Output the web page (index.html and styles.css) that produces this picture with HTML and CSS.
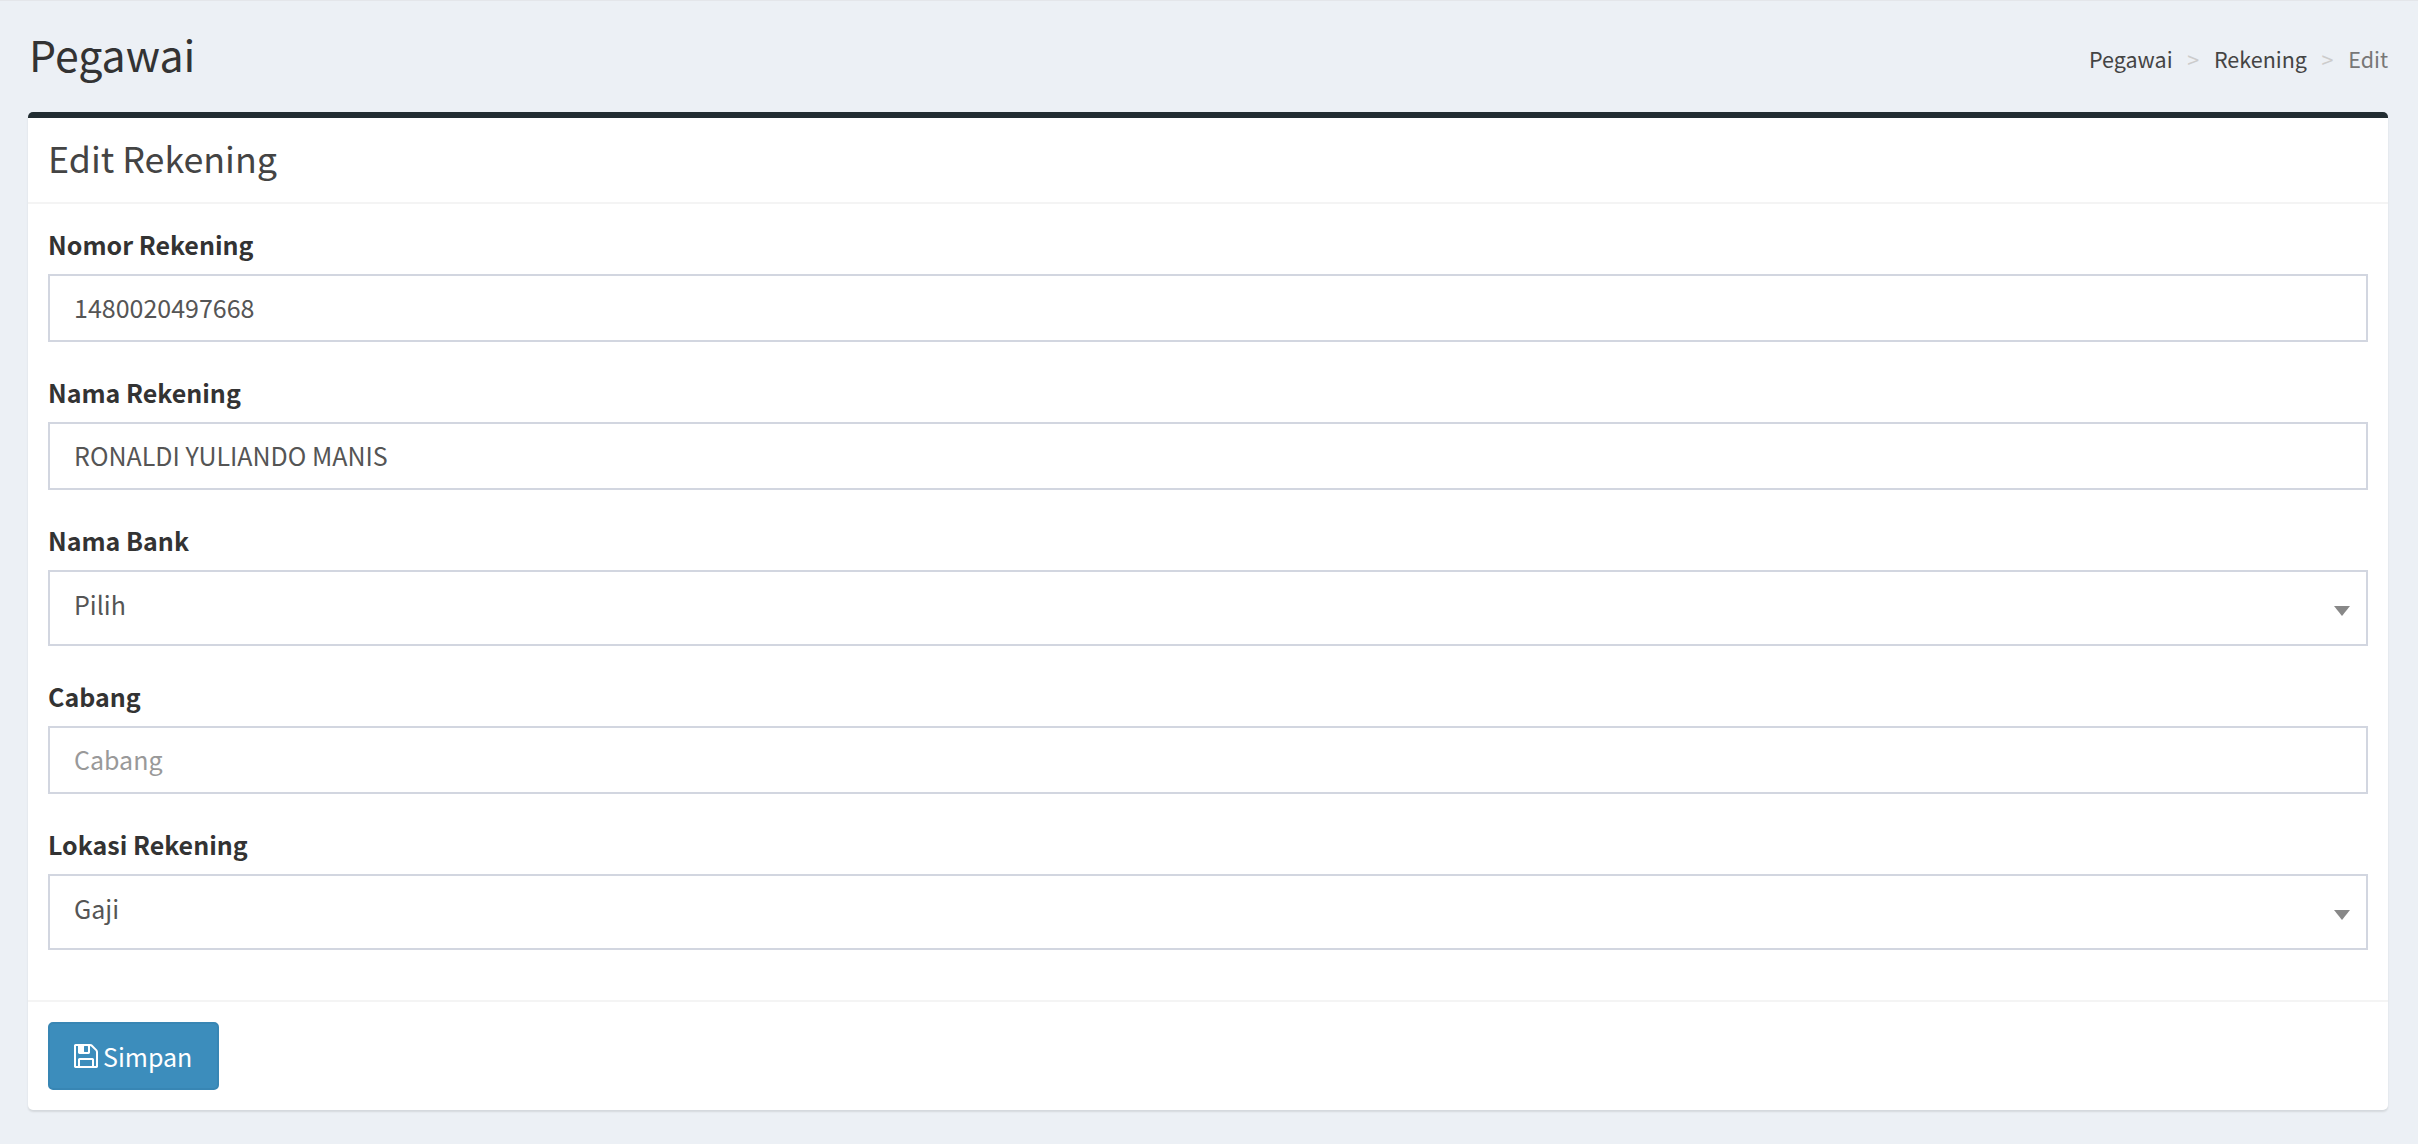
FILE: index.html
```html
<!DOCTYPE html>
<html lang="id">
<head>
<meta charset="utf-8">
<title>Edit Rekening</title>
<link rel="stylesheet" href="styles.css">
</head>
<body>
<div class="page">
  <header class="page-header">
    <h1 class="page-title">Pegawai</h1>
    <nav class="crumbs">
      <a class="crumb">Pegawai</a><span class="sep">&gt;</span>
      <a class="crumb">Rekening</a><span class="sep">&gt;</span>
      <span class="crumb current">Edit</span>
    </nav>
  </header>
  <section class="box">
    <div class="box-header"><h2 class="box-title">Edit Rekening</h2></div>
    <form class="box-body">
      <div class="field">
        <label class="label">Nomor Rekening</label>
        <input class="control" type="text" value="1480020497668">
      </div>
      <div class="field">
        <label class="label">Nama Rekening</label>
        <input class="control" type="text" value="RONALDI YULIANDO MANIS">
      </div>
      <div class="field">
        <label class="label">Nama Bank</label>
        <div class="select-wrap">
          <select class="control select"><option>Pilih</option></select>
        </div>
      </div>
      <div class="field">
        <label class="label">Cabang</label>
        <input class="control" type="text" placeholder="Cabang">
      </div>
      <div class="field">
        <label class="label">Lokasi Rekening</label>
        <div class="select-wrap">
          <select class="control select"><option>Gaji</option></select>
        </div>
      </div>
    </form>
    <div class="box-footer">
      <button class="btn" type="button">
        <svg class="icon" viewBox="128 128 1536 1536" aria-hidden="true"><path fill="currentColor" d="M512 1536h768v-384h-768v384zm896 0h128v-896q0-14-10-38.500t-20-34.500l-281-281q-10-10-34-20t-39-10v416q0 40-28 68t-68 28h-576q-40 0-68-28t-28-68v-416h-128v1280h128v-416q0-40 28-68t68-28h832q40 0 68 28t28 68v416zm-384-928v-320q0-13-9.500-22.500t-22.500-9.500h-192q-13 0-22.500 9.500t-9.500 22.500v320q0 13 9.500 22.500t22.500 9.500h192q13 0 22.500-9.500t9.500-22.500zm640 32v928q0 40-28 68t-68 28h-1344q-40 0-68-28t-28-68v-1344q0-40 28-68t68-28h928q40 0 88 20t76 48l280 280q28 28 48 76t20 88z"/></svg>
        <span>Simpan</span>
      </button>
    </div>
  </section>
</div>
</body>
</html>
```
FILE: styles.css
```css
* { box-sizing: border-box; }
html, body { margin: 0; height: 100%; }
body {
  background: #ecf0f5;
  color: #333;
  font-family: "Noto Sans CJK SC", "Noto Sans", sans-serif;
  font-size: 25px;
  overflow: hidden;
}
.page {
  min-height: 1144px;
  padding: 0 30px 0 28px;
  border-top: 1px solid #e4e6ea;
}
.page-header {
  height: 111px;
  display: flex;
  justify-content: space-between;
  align-items: flex-start;
}
.page-title {
  margin: 25px 0 0 1px;
  font-size: 42.8px;
  line-height: 54px;
  font-weight: 400;
  color: #333;
}
.crumbs {
  margin-top: 43px;
  display: flex;
  align-items: center;
  font-size: 21.5px;
  line-height: 30px;
  color: #444;
}
.crumb.current { color: #777; }
.sep { color: #ccc; margin: 0 14.7px; }
.box {
  background: #fff;
  border-top: 6px solid #222d32;
  border-radius: 5px;
  box-shadow: 0 2px 2px rgba(0, 0, 0, 0.1);
  height: 998px;
}
.box-header {
  height: 86px;
  padding: 0 20px 6px;
  border-bottom: 2px solid #f4f4f4;
  display: flex;
  align-items: center;
}
.box-title {
  margin: 0;
  font-size: 35.8px;
  line-height: 48px;
  font-weight: 400;
  color: #444;
}
.box-body {
  height: 798px;
  padding: 25px 20px 0;
  border-bottom: 2px solid #f4f4f4;
}
.field { margin-bottom: 35px; }
.label {
  display: block;
  font-size: 25px;
  line-height: 30px;
  font-weight: 700;
  color: #333;
  margin-bottom: 15px;
}
.control {
  display: block;
  width: 100%;
  height: 68px;
  padding: 0 24px 2px;
  border: 2px solid #d2d6e0;
  border-radius: 0;
  background: #fff;
  color: #555;
  font-family: inherit;
  font-size: 25px;
  outline: none;
}
.control::placeholder { color: #999; opacity: 1; }
.select-wrap { position: relative; }
.select {
  height: 76px;
  padding-bottom: 9px;
  appearance: none;
}
.select-wrap::after {
  content: "";
  position: absolute;
  top: 36px;
  right: 18px;
  border-style: solid;
  border-width: 10px 8px 0;
  border-color: #888 transparent transparent;
}
.box-footer { padding: 20px; }
.btn {
  display: flex;
  align-items: center;
  width: 171px;
  height: 68px;
  padding: 0 24px;
  gap: 5px;
  background: #3c8dbc;
  border: 2px solid #3886b4;
  border-radius: 5px;
  color: #fff;
  font-family: inherit;
  font-size: 25px;
}
.icon { width: 24px; height: 24px; flex: none; }
```
